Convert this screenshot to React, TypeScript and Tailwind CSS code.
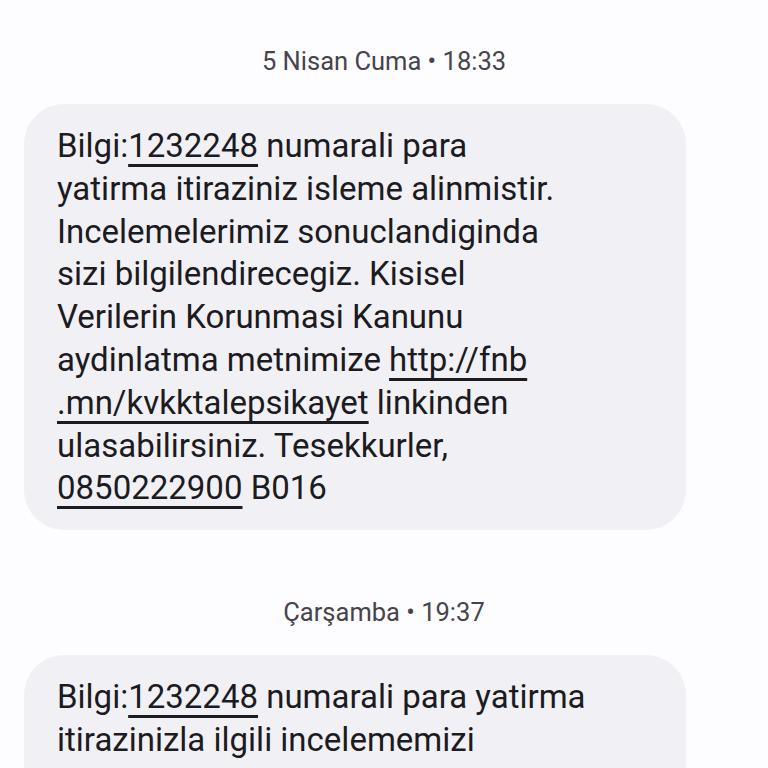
import React from "react"

const u = "underline decoration-[2.5px] underline-offset-[7px]"

function DateHeader({ label }: { label: string }) {
    return (
        <div className="text-center text-[25.5px] leading-[32px] text-[#46454c]">{label}</div>
    )
}

function Bubble({ children }: { children: React.ReactNode }) {
    return (
        <div className="ml-[24px] w-[662px] rounded-[40px] bg-[#f1f0f5] pl-[33px] pr-[20px] pt-[21px] pb-[20px] text-[33px] leading-[42.8px] text-[#1c1b1f]">
            {children}
        </div>
    )
}

export default function App() {
    return (
        <div className="h-[768px] w-[768px] overflow-hidden bg-[#fdfcff]" style={{ fontFamily: "Roboto, 'Noto Sans', sans-serif" }}>
            <div className="pt-[45px]">
                <DateHeader label="5 Nisan Cuma • 18:33" />
            </div>
            <div className="mt-[27px]">
                <Bubble>
                    Bilgi:<span className={u}>1232248</span> numarali para<br />
                    yatirma itiraziniz isleme alinmistir.<br />
                    Incelemelerimiz sonuclandiginda<br />
                    sizi bilgilendirecegiz. Kisisel<br />
                    Verilerin Korunmasi Kanunu<br />
                    aydinlatma metnimize <span className={u}>http://fnb</span><br />
                    <span className={u}>.mn/kvkktalepsikayet</span> linkinden<br />
                    ulasabilirsiniz. Tesekkurler,<br />
                    <span className={u}>0850222900</span> B016
                </Bubble>
            </div>
            <div className="mt-[66px]">
                <DateHeader label="Çarşamba • 19:37" />
            </div>
            <div className="mt-[27px]">
                <Bubble>
                    Bilgi:<span className={u}>1232248</span> numarali para yatirma<br />
                    itirazinizla ilgili incelememizi<br />
                    sonuclandirdik. Sonuc ile ilgili detaylar
                </Bubble>
            </div>
        </div>
    )
}
